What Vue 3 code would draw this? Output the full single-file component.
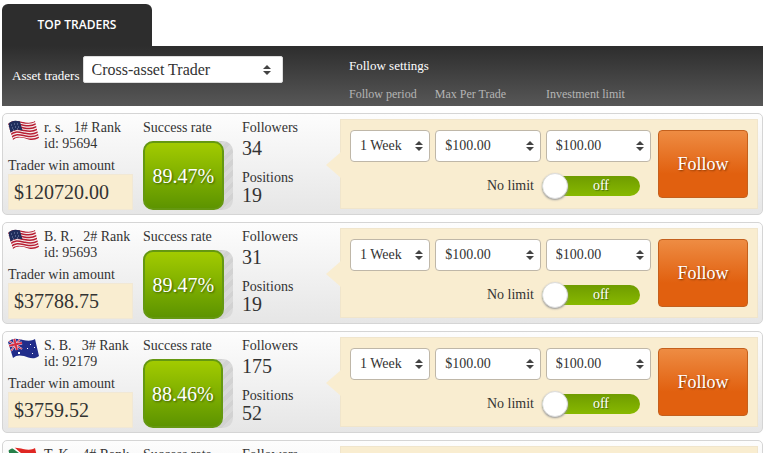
<script setup>
import { reactive, ref } from 'vue'

const assetType = ref('Cross-asset Trader')
const traders = reactive([
  { name: 'r. s.', rank: 1, id: 95694, flag: 'us', amount: '$120720.00', rate: 89.47, followers: 34, positions: 19 },
  { name: 'B. R.', rank: 2, id: 95693, flag: 'us', amount: '$37788.75', rate: 89.47, followers: 31, positions: 19 },
  { name: 'S. B.', rank: 3, id: 92179, flag: 'au', amount: '$3759.52', rate: 88.46, followers: 175, positions: 52 },
  { name: 'T. K.', rank: 4, id: 91842, flag: 'za', amount: '$3120.40', rate: 88.1, followers: 28, positions: 17 },
].map((t) => ({ ...t, period: '1 Week', maxTrade: '$100.00', limit: '$100.00', noLimit: false })))

const wave = 'M0 4 C5 -1 10 1 15 2 C20 3 24 3 27 1 L31 18 C26 22 21 20 16 18 C12 17 8 17 5 20 Z'
</script>

<template>
  <main class="page">
    <nav class="tabs"><a class="tab" href="#traders">TOP TRADERS</a></nav>
    <header class="toolbar">
      <div class="filter">
        <label for="asset">Asset traders</label>
        <span class="select large">
          <select id="asset" v-model="assetType"><option>Cross-asset Trader</option></select>
          <svg viewBox="0 0 8 10"><path d="M4 0L8 4H0ZM0 6H8L4 10Z" /></svg>
        </span>
      </div>
      <div class="settings">
        <h2>Follow settings</h2>
        <div class="columns captions">
          <span>Follow period</span><span>Max Per Trade</span><span>Investment limit</span>
        </div>
      </div>
    </header>

    <section id="traders" class="list">
      <article v-for="t in traders" :key="t.id" class="card">
        <div class="trader">
          <div class="identity">
            <svg class="flag" viewBox="0 0 32 23" aria-hidden="true">
              <defs><clipPath :id="'wave' + t.id"><path :d="wave" /></clipPath></defs>
              <g :clip-path="`url(#wave${t.id})`">
                <template v-if="t.flag === 'us'">
                  <path d="M0 0H32V23H0Z" fill="#f6eff0" />
                  <path
                    v-for="n in 7" :key="n" fill="none" stroke="#b81f33" stroke-width="1.5"
                    :transform="`translate(${n * 0.6 - 1} ${(n - 1) * 2.7})`"
                    d="M0 4.5 C5 -0.5 10 1.5 15 2.5 C20 3.5 24 3.5 27 1.5 L30 0"
                  />
                  <path d="M0 0H11.5L14.5 10.500 C9 9 6 10 2 13Z" fill="#1f2d5c" />
                  <path d="M3 5h1M6 4h1M9 4h1M4 8h1M7 7h1M10 7h1M5 10h1M9 9h1" stroke="#8592b5" />
                </template>
                <template v-else-if="t.flag === 'au'">
                  <path d="M0 0H32V23H0Z" fill="#202c8a" />
                  <path d="M1 3L14 11M12 1L3 13" stroke="#e8dff0" stroke-width="2" />
                  <path d="M1 3L14 11M12 1L3 13" stroke="#d62f43" />
                  <path d="M6 0L9 12M0 8L14 5" stroke="#e8dff0" stroke-width="3" />
                  <path d="M6 0L9 12M0 8L14 5" stroke="#d62f43" stroke-width="2" />
                  <path d="M10 14h2v2h-2zM22 6h1v1h-1zM19 10h1v1h-1zM26 9h1v1h-1zM24 15h1v1h-1z" fill="#fff" />
                </template>
                <template v-else>
                  <path d="M0 0H32V23H0Z" fill="#fff" />
                  <path d="M6 0H32V9C26 11 20 10 14 7Z" fill="#df2723" />
                  <path d="M0 2L4 1L15 9C21 12 27 12 32 10V14C26 16 20 15 15 13L5 21Z" fill="#27804a" />
                  <path d="M0 6L9 12L4 18Z" fill="#222" />
                  <path d="M16 15L32 16V23H5Z" fill="#27408b" />
                </template>
              </g>
            </svg>
            <div>
              <div class="name"><span>{{ t.name }}</span><span>{{ t.rank }}# Rank</span></div>
              <div>id: {{ t.id }}</div>
            </div>
          </div>
          <div class="caption">Trader win amount</div>
          <div class="amount">{{ t.amount }}</div>
        </div>

        <div class="success">
          <div>Success rate</div>
          <div class="meter">
            <div class="fill" :style="{ width: t.rate + '%' }">{{ t.rate.toFixed(2) }}%</div>
          </div>
        </div>

        <dl class="stats">
          <dt>Followers</dt><dd>{{ t.followers }}</dd>
          <dt>Positions</dt><dd>{{ t.positions }}</dd>
        </dl>

        <form class="panel columns" @submit.prevent>
          <span class="select">
            <select v-model="t.period" aria-label="Follow period"><option>1 Week</option></select>
            <svg viewBox="0 0 8 10"><path d="M4 0L8 4H0ZM0 6H8L4 10Z" /></svg>
          </span>
          <span class="select">
            <select v-model="t.maxTrade" aria-label="Max per trade"><option>$100.00</option></select>
            <svg viewBox="0 0 8 10"><path d="M4 0L8 4H0ZM0 6H8L4 10Z" /></svg>
          </span>
          <span class="select">
            <select v-model="t.limit" aria-label="Investment limit"><option>$100.00</option></select>
            <svg viewBox="0 0 8 10"><path d="M4 0L8 4H0ZM0 6H8L4 10Z" /></svg>
          </span>
          <button class="follow" type="submit">Follow</button>
          <label class="nolimit">
            <span>No limit</span>
            <span class="switch">
              <input v-model="t.noLimit" type="checkbox" />
              <span>{{ t.noLimit ? 'on' : 'off' }}</span>
            </span>
          </label>
        </form>
      </article>
    </section>
  </main>
</template>

<style>
body { background: #fff; overflow: hidden; }
</style>

<style scoped>
* { box-sizing: border-box; }
.page {
  padding: 4px 0 0 2px;
  font: 14px/16px "Liberation Serif", serif;
  color: #333;
}
.tabs { display: flex; }
.tab {
  width: 150px;
  padding-bottom: 1px;
  border-radius: 6px 6px 0 0;
  background: #2d2d2d;
  color: #fff;
  font: 600 12px/41px "Open Sans", sans-serif;
  text-align: center;
  text-decoration: none;
}
.toolbar {
  display: flex;
  height: 60px;
  background: linear-gradient(#2d2d2d, #575757);
  color: #fff;
  font-size: 13px;
}
.filter {
  display: flex;
  align-items: flex-start;
  flex: 0 0 337px;
  gap: 3px;
  padding: 10px 0 0 10px;
}
.filter label { padding-top: 12px; }
.filter .select { width: 200px; }
.settings { flex: 1; padding: 12px 14px 0 10px; }
h2 { margin: 0 0 12px; font-size: 13px; font-weight: 400; line-height: 16px; }
.columns {
  display: grid;
  grid-template-columns: 80fr 105fr 105fr 92px;
  column-gap: 5px;
}
.captions { color: #b5b5b5; font-size: 12px; }

.select { position: relative; display: block; }
.select select {
  appearance: none;
  display: block;
  width: 100%;
  height: 32px;
  padding: 0 20px 2px 9px;
  border: 1px solid #bfb7a8;
  border-radius: 4px;
  background: #fff;
  color: #333;
  font: 14px "Liberation Serif", serif;
}
.select svg {
  position: absolute;
  top: 11px;
  right: 7px;
  width: 8px;
  height: 10px;
  fill: #444;
  pointer-events: none;
}
.select.large select { height: 27px; padding: 0 24px 0 8px; border-color: #ddd; border-radius: 2px; font-size: 16px; }
.select.large svg { top: 9px; right: 12px; }

.list { display: grid; gap: 7px; padding-top: 7px; }
.card {
  display: flex;
  height: 102px;
  padding: 5px 4px 5px 5px;
  border: 1px solid #d5d5d5;
  border-radius: 5px;
  background: linear-gradient(#fdfdfd, #e6e6e6);
}
.trader { flex: 0 0 125px; padding-top: 1px; }
.identity { display: flex; gap: 4px; height: 37px; }
.flag { width: 32px; height: 23px; flex: none; }
.name { display: flex; gap: 10px; white-space: nowrap; }
.caption { line-height: 17px; }
.amount {
  height: 36px;
  padding: 0 5px;
  border: 1px solid #f1e8d5;
  background: #f9edd0;
  font-size: 20px;
  line-height: 35px;
}
.success { flex: 0 0 90px; margin-left: 10px; padding-top: 1px; }
.meter {
  height: 69px;
  margin-top: 5px;
  border-radius: 10px;
  background: repeating-linear-gradient(135deg, #d9d9d9 0 4px, #d2d2d2 4px 8px);
}
.fill {
  height: 100%;
  border: 2px solid #659811;
  border-radius: 10px;
  background: linear-gradient(#a2cb00, #5d9400);
  color: #fff;
  font-size: 20px;
  line-height: 66px;
  text-align: center;
  text-shadow: 1px 1px 2px #3c5d00;
}
.stats { flex: 0 0 107px; margin: 0; padding: 1px 0 0 9px; }
dt { line-height: 16px; }
dd { margin: 0 0 9px; font-size: 20px; line-height: 25px; }
dd + dt + dd { line-height: 18px; }
.panel {
  position: relative;
  flex: 1;
  grid-template-rows: 32px 1fr;
  padding: 10px 9px 9px;
  border: 1px solid #f0e5cc;
  background: #f9edd0;
}
.panel::before {
  content: "";
  position: absolute;
  top: 32px;
  left: -15px;
  border: solid transparent;
  border-width: 13px 15px 13px 0;
  border-right-color: #f9edd0;
}
.follow {
  grid-column: 4;
  grid-row: 1 / 3;
  height: 68px;
  margin-left: 2px;
  padding: 0;
  border: 1px solid #c4601d;
  border-radius: 4px;
  background: linear-gradient(#ee8c43, #e1600f 65%, #e1600f);
  color: #fff;
  font: 18px "Liberation Serif", serif;
  text-shadow: 1px 1px 2px #803300;
}
.nolimit {
  grid-column: 1 / 4;
  grid-row: 2;
  display: flex;
  align-items: center;
  align-self: start;
  justify-content: flex-end;
  gap: 8px;
  margin-top: 12px;
  padding-right: 11px;
}
.switch { display: grid; width: 98px; height: 24px; align-items: center; }
.switch > * { grid-area: 1 / 1; }
.switch span { padding-left: 20px; color: #fff; text-align: center; text-shadow: 1px 1px 1px #456b00; }
.switch input {
  appearance: none;
  display: flex;
  align-items: center;
  height: 20px;
  margin: 0;
  border-radius: 10px;
  background: linear-gradient(#6f9c00, #88b900);
}
.switch input::before {
  content: "";
  width: 24px;
  height: 24px;
  flex: none;
  border: 1px solid #ddd;
  border-radius: 50%;
  background: #fff;
  box-shadow: 0 1px 2px #999;
}
.switch input:checked { justify-content: flex-end; }
</style>
